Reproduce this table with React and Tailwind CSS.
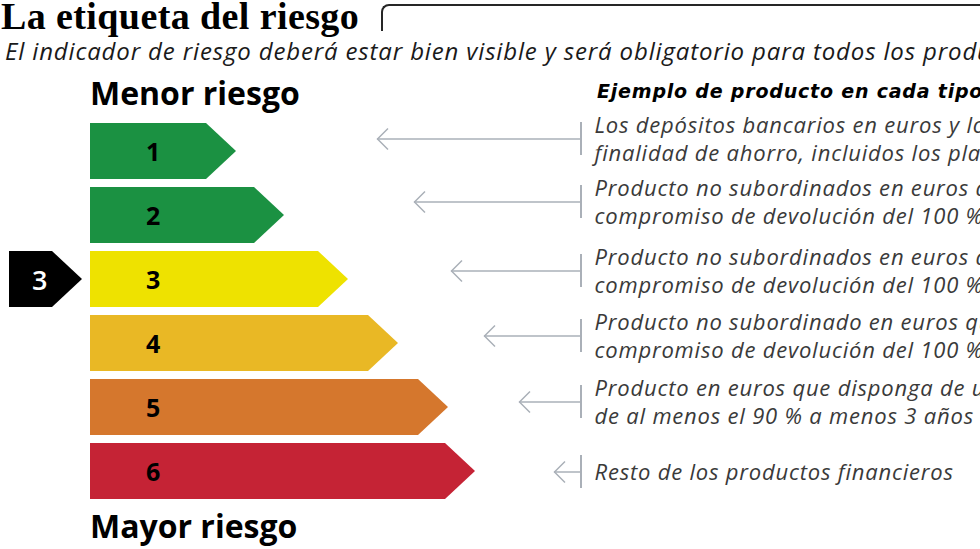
import React from "react";

const bars = [
  { n: 1, w: 146, color: "bg-[#1b9142]" },
  { n: 2, w: 194, color: "bg-[#1b9142]" },
  { n: 3, w: 258, color: "bg-[#eee200]", current: true },
  { n: 4, w: 308, color: "bg-[#e9b825]" },
  { n: 5, w: 358, color: "bg-[#d5772d]" },
  { n: 6, w: 385, color: "bg-[#c52335]" },
];

const examples = [
  {
    x: 376,
    mt: "mt-[10px]",
    lines: [
      "Los depósitos bancarios en euros y los productos de seguro con",
      "finalidad de ahorro, incluidos los planes de previsión asegurados",
    ],
  },
  {
    x: 413,
    mt: "mt-[8px]",
    lines: [
      "Producto no subordinados en euros que tengan un",
      "compromiso de devolución del 100 % del principal a menos de 3 años",
    ],
  },
  {
    x: 450,
    mt: "mt-[14px]",
    lines: [
      "Producto no subordinados en euros que tengan un",
      "compromiso de devolución del 100 % del principal entre 3 y 5 años",
    ],
  },
  {
    x: 483,
    mt: "mt-[10px]",
    lines: [
      "Producto no subordinado en euros que tenga un",
      "compromiso de devolución del 100 % del principal a más de 5 años",
    ],
  },
  {
    x: 518,
    mt: "mt-[11px]",
    lines: [
      "Producto en euros que disponga de un compromiso de devolución",
      "de al menos el 90 % a menos 3 años",
    ],
  },
  {
    x: 553,
    mt: "mt-[26px]",
    lines: ["Resto de los productos financieros"],
  },
];

function Arrow({ width }) {
  return (
    <svg width={width} height="24" viewBox={`0 0 ${width} 24`} className="shrink-0">
      <g fill="none" stroke="#aab0b8" strokeWidth="1.5">
        <path d={`M1 12H${width}`} />
        <path d="M12 1.5L1.5 12L12 22.5" />
      </g>
    </svg>
  );
}

function Bar({ n, w, color }) {
  return (
    <div
      className={`shrink-0 h-[56px] flex items-center pl-[56px] ${color} [clip-path:polygon(0_0,calc(100%-30px)_0,100%_50%,calc(100%-30px)_100%,0_100%)]`}
      style={{ width: w }}
    >
      <span className="text-[25px] font-bold leading-none text-black">{n}</span>
    </div>
  );
}

export default function App() {
  return (
    <div className="w-[980px] h-[549px] overflow-hidden bg-white text-black font-['Open_Sans',sans-serif]">
      <div className="flex items-start">
        <h1 className="mt-[-3px] pl-[1px] text-[38px] leading-none font-bold font-['Liberation_Serif',serif] whitespace-nowrap tracking-[0.4px]">
          La etiqueta del riesgo
        </h1>
        <div className="flex-1 ml-[22px] mt-[4px] h-[27px] border-l-2 border-t-2 border-[#262626] rounded-tl-[8px]" />
      </div>

      <p className="mt-[4px] pl-[5px] text-[24px] leading-none italic text-[#1a1a1a] whitespace-nowrap tracking-[0.85px]">
        El indicador de riesgo deberá estar bien visible y será obligatorio para todos los productos financieros
      </p>

      <div className="flex">
        <div className="w-[376px] shrink-0">
          <div className="mt-[14px] pl-[90px] text-[32px] leading-none font-bold whitespace-nowrap">
            Menor riesgo
          </div>
          <div className="mt-[14px] flex flex-col gap-[8px]">
            {bars.map((b) => (
              <div key={b.n} className="flex items-center h-[56px]">
                <div className="w-[90px] shrink-0 pl-[9px]">
                  {b.current && (
                    <div className="w-[73px] h-[56px] bg-black flex items-center pl-[23px] [clip-path:polygon(0_0,43px_0,100%_50%,43px_100%,0_100%)]">
                      <span className="text-[27px] font-semibold leading-none text-white">3</span>
                    </div>
                  )}
                </div>
                <Bar {...b} />
              </div>
            ))}
          </div>
          <div className="mt-[11px] pl-[90px] text-[32px] leading-none font-bold whitespace-nowrap">
            Mayor riesgo
          </div>
        </div>

        <div className="flex-1 min-w-0">
          <div className="mt-[19px] pl-[221px] text-[19px] leading-none font-bold italic whitespace-nowrap font-['DejaVu_Sans',sans-serif] tracking-[0.8px]">
            Ejemplo de producto en cada tipo de riesgo
          </div>
          {examples.map((e, i) => (
            <div key={i} className={`flex items-center ${e.mt}`}>
              <div className="shrink-0" style={{ marginLeft: e.x - 376 }}>
                <Arrow width={580 - e.x} />
              </div>
              <div className="w-[1.5px] h-[33px] bg-[#aab0b8] shrink-0" />
              <div className="pl-[13px] text-[22px] leading-[27.5px] italic text-[#3a3a3a] whitespace-nowrap tracking-[0.8px]">
                {e.lines.map((l) => (
                  <div key={l}>{l}</div>
                ))}
              </div>
            </div>
          ))}
        </div>
      </div>
    </div>
  );
}
